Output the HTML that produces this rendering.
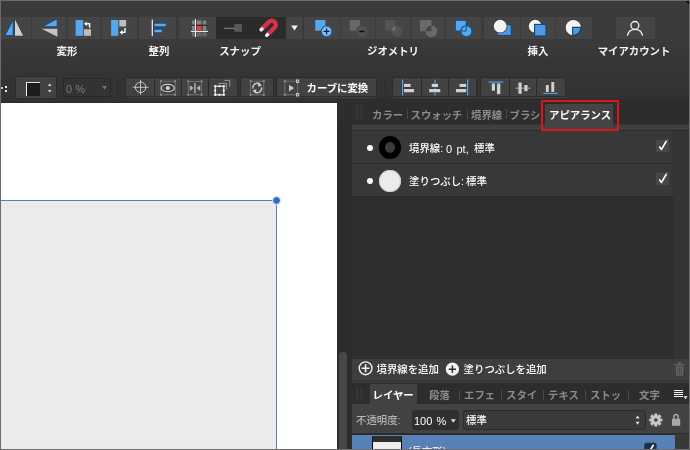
<!DOCTYPE html>
<html lang="ja">
<head>
<meta charset="utf-8">
<title>アピアランス</title>
<style>
*{box-sizing:border-box;margin:0;padding:0}
html,body{width:690px;height:450px;overflow:hidden;background:#393939}
body{will-change:transform;font-family:"Liberation Sans","Noto Sans CJK JP",sans-serif;font-size:10.4px;color:#fff;position:relative}
.a{position:absolute}
#frame{left:0;top:0;width:690px;height:450px;border:1px solid #6c6c6c;z-index:50;pointer-events:none}
/* top toolbar */
#tb{left:0;top:0;width:690px;height:102px;background:linear-gradient(#3b3b3b 0,#3a3a3a 40px,#353535 70px,#313131 100px)}
.b{position:absolute;top:17px;height:22px;background:#454545}
.b.p{background:#2b2b2b}
.lbl{position:absolute;top:45px;height:14px;line-height:14px;font-weight:700;font-size:10.4px;white-space:nowrap;transform:translateX(-50%);color:#f4f4f4}
.cb{position:absolute;top:78px;height:18px;background:#424242}
.cg{position:absolute;top:77px;height:20px;background:#2a2a2a;border-radius:2px;box-shadow:0 1px 0 #414141}
svg{position:absolute;left:0;top:0;overflow:visible}
/* canvas */
#cv{left:1px;top:103px;width:336px;height:347px;background:#fff}
#gap{left:337px;top:102px;width:15px;height:348px;background:#2c2c2c}
/* right panel */
#rp{left:352px;top:102px;width:338px;height:348px;background:#343434}
.tab{position:absolute;height:14px;line-height:14px;font-size:10.4px;color:#8b8b8b;white-space:nowrap;font-weight:700}
.sep{position:absolute;width:1px;height:10px;background:#484848}
.t{position:absolute;white-space:nowrap;line-height:14px;height:14px;font-weight:500}
</style>
</head>
<body>
<div class="a" id="tb">
  <!-- transform group -->
  <div class="b" style="left:0;width:31px"></div>
  <div class="b" style="left:32px;width:34px"></div>
  <div class="b" style="left:67px;width:34px"></div>
  <div class="b" style="left:102px;width:35px"></div>
  <!-- align -->
  <div class="b" style="left:139px;width:37.4px"></div>
  <!-- snap -->
  <div class="b" style="left:179px;width:37px"></div>
  <div class="b p" style="left:216px;width:35px"></div>
  <div class="b p" style="left:251px;width:35px"></div>
  <div class="b" style="left:286px;width:16px"></div>
  <!-- geometry -->
  <div class="b" style="left:304px;width:36px"></div>
  <div class="b" style="left:341px;width:34px"></div>
  <div class="b" style="left:376px;width:34px"></div>
  <div class="b" style="left:411px;width:34px"></div>
  <div class="b" style="left:446px;width:35px"></div>
  <!-- insert -->
  <div class="b" style="left:484px;width:36px"></div>
  <div class="b" style="left:521px;width:34px"></div>
  <div class="b" style="left:556px;width:36px"></div>
  <!-- account -->
  <div class="b" style="left:615.5px;width:39px"></div>


  <svg width="690" height="102" viewBox="0 0 690 102" style="z-index:5">
    <!-- flip horizontal -->
    <path d="M13.2 19.8 L13.2 35.6 L4.8 35.6 Z" fill="#56a8ee" stroke="#1d4570" stroke-width="1" stroke-linejoin="round"/>
    <path d="M15 19.6 L15 35.8 L23.1 35.8 Z" fill="#d0d0d0" stroke="#303030" stroke-width=".7" paint-order="stroke"/>
    <!-- flip vertical -->
    <path d="M57.2 18.8 L57.2 26.8 L42 26.8 Z" fill="#56a8ee" stroke="#1d4570" stroke-width="1" stroke-linejoin="round"/>
    <path d="M41.6 28.8 L57.4 28.8 L57.4 36.8 Z" fill="#c4c4c4"/>
    <!-- rotate ccw -->
    <rect x="75.6" y="20" width="7.6" height="15.8" fill="#56a8ee"/>
    <rect x="84" y="29.2" width="7" height="6.6" fill="#bdbdbd"/>
    <path d="M89.6 27.8 L89.6 23.8 L86 23.8" fill="none" stroke="#fff" stroke-width="1.4"/>
    <path d="M84 23.8 L86.8 21.6 L86.8 26 Z" fill="#fff"/>
    <!-- rotate cw -->
    <rect x="111.1" y="20" width="7.2" height="15.8" fill="#56a8ee"/>
    <rect x="119.3" y="20" width="6.8" height="6.5" fill="#bdbdbd"/>
    <path d="M125 28 L125 32.4 L122 32.4" fill="none" stroke="#fff" stroke-width="1.4"/>
    <path d="M119.6 32.4 L122.6 30 L122.6 34.8 Z" fill="#fff"/>
    <!-- align -->
    <rect x="151.7" y="19.6" width="1.2" height="16.4" fill="#f0f0f0"/>
    <rect x="154" y="23.2" width="12.2" height="3.6" fill="#5aacf0" stroke="#1c4a7c" stroke-width="1"/>
    <rect x="154" y="29.2" width="8.2" height="3.6" fill="#5aacf0" stroke="#1c4a7c" stroke-width="1"/>
    <!-- snap grid -->
    <rect x="191.4" y="20" width="15.4" height="11" fill="#303030"/>
    <g fill="#858585">
      <rect x="191.8" y="20.4" width="3" height="4.2"/><rect x="196.6" y="20.4" width="5" height="4.2"/><rect x="202.6" y="20.4" width="3.8" height="4.2"/>
      <rect x="191.8" y="26" width="3" height="4.6"/><rect x="202.6" y="26" width="3.8" height="4.6"/>
      <rect x="191.8" y="32.4" width="3" height="4" opacity=".6"/><rect x="196.6" y="32.4" width="5" height="4" opacity=".6"/><rect x="202.6" y="32.4" width="3.8" height="4" opacity=".6"/>
    </g>
    <rect x="196.6" y="26" width="5" height="4.6" fill="#e8404a"/>
    <rect x="194.9" y="19" width="1.1" height="18" fill="#e8e8e8"/>
    <rect x="191" y="30.9" width="17" height="1.1" fill="#e8e8e8"/>
    <!-- snap to (dim) -->
    <rect x="234.3" y="24" width="7.6" height="7.8" fill="#585858"/>
    <rect x="224" y="27.8" width="11" height="1" fill="#8c8c8c"/>
    <!-- magnet -->
    <path d="M261.9 29 L268.97 21.87 A4 4 0 0 1 274.63 27.53 L267.5 34.6" fill="none" stroke="#d8304a" stroke-width="4.4"/>
    <path d="M261.9 29 L261.1 29.8" stroke="#fff" stroke-width="3.4" stroke-linecap="round" fill="none"/>
    <path d="M267.5 34.6 L266.7 35.4" stroke="#fff" stroke-width="3.4" stroke-linecap="round" fill="none"/>
    <!-- dropdown -->
    <path d="M291.2 25.4 L297.8 25.4 L294.5 30.4 Z" fill="#f2f2f2"/>
    <!-- add -->
    <rect x="315.2" y="20" width="10.2" height="10.7" fill="#56a8ee"/>
    <circle cx="326.6" cy="31.4" r="5.4" fill="#7dbdf4" stroke="#1e4f86" stroke-width="1.1"/>
    <path d="M323.6 31.4 H329.6 M326.6 28.4 V34.4" stroke="#08203c" stroke-width="1.2"/>
    <!-- subtract (disabled) -->
    <rect x="349.7" y="20" width="10.2" height="10.7" fill="#686868"/>
    <circle cx="362" cy="31.4" r="5.6" fill="#525252" stroke="#484848" stroke-width="1.2"/>
    <rect x="359.4" y="30.7" width="5.2" height="1.5" fill="#0c0c0c"/>
    <!-- intersect (disabled) -->
    <rect x="385.2" y="20" width="10.3" height="10.7" fill="#545454"/>
    <circle cx="397" cy="31.4" r="5.6" fill="#515151"/>
    <path d="M391.6 30.7 A5.6 5.6 0 0 1 395.5 26 L395.5 30.7 Z" fill="#707070"/>
    <!-- xor (disabled) -->
    <rect x="420" y="20" width="11.4" height="11.2" fill="#6a6a6a"/>
    <circle cx="431.4" cy="31.4" r="5.8" fill="#6a6a6a"/>
    <path d="M425.6 31.2 A5.8 5.8 0 0 1 431.4 25.6 L431.4 31.2 Z" fill="#464646"/>
    <!-- divide -->
    <rect x="455.4" y="20.4" width="10.8" height="10.6" fill="#56a8ee" stroke="#1e4f86" stroke-width="1"/>
    <circle cx="466.4" cy="31.2" r="5.6" fill="#56a8ee" stroke="#1e4f86" stroke-width="1.2"/>
    <path d="M460.8 31 H466.2 V25.6" fill="none" stroke="#1e4f86" stroke-width="1"/>
    <!-- insert behind -->
    <rect x="497.2" y="24.6" width="14" height="10.8" fill="#4a9be6" stroke="#1d3f66" stroke-width="1"/>
    <circle cx="500.2" cy="26.2" r="7.2" fill="#3a3a3a"/>
    <circle cx="500.2" cy="26.2" r="6.4" fill="#f4f4f4"/>
    <!-- insert top -->
    <circle cx="535.2" cy="26.2" r="7.2" fill="#3a3a3a"/>
    <circle cx="535.2" cy="26.2" r="6.4" fill="#f4f4f4"/>
    <rect x="534.6" y="24.4" width="11.4" height="11.6" fill="#4a9be6" stroke="#1d3f66" stroke-width="1.1"/>
    <!-- insert inside -->
    <circle cx="573.3" cy="27.7" r="8.4" fill="#3a3a3a"/>
    <circle cx="573.3" cy="27.7" r="7.6" fill="#f4f4f4"/>
    <path d="M572.6 27.4 H580.9 A7.6 7.6 0 0 1 572.6 35.3 Z" fill="#4a9be6" stroke="#1d3f66" stroke-width="1.1" stroke-linejoin="round"/>
    <!-- account -->
    <circle cx="634.9" cy="25.4" r="3.9" fill="none" stroke="#f4f4f4" stroke-width="1.3"/>
    <path d="M627.6 35.2 A7.6 7.6 0 0 1 642.4 35.2" fill="none" stroke="#f4f4f4" stroke-width="1.3" stroke-linecap="round"/>

    <!-- ===== context toolbar icons ===== -->
    <!-- stepper -->
    <path d="M47.9 86 L51.5 86 L49.7 83.4 Z M47.9 90 L51.5 90 L49.7 92.6 Z" fill="#d4d4d4"/>
    <!-- 0% dropdown -->
    <path d="M102 86 L107 86 L104.5 89.6 Z" fill="#777"/>
    <!-- crosshair -->
    <circle cx="140.6" cy="87.3" r="5.2" fill="none" stroke="#d8d8d8" stroke-width=".9"/>
    <path d="M132.8 87.3 H148.4 M140.6 80 V94.8" stroke="#d0d0d0" stroke-width=".9"/>
    <!-- eye -->
    <g stroke="#787878" stroke-width=".8" fill="none">
      <rect x="160.8" y="81.2" width="14.4" height="13.6"/>
      <rect x="188.2" y="81.4" width="13.4" height="13.4"/>
      <rect x="250.6" y="81.2" width="13.2" height="13.6"/>
      <rect x="284.8" y="81.2" width="12.8" height="13.6"/>
    </g>
    <g fill="#8a8a8a">
      <rect x="159.8" y="80.2" width="2" height="2"/><rect x="174.2" y="80.2" width="2" height="2"/><rect x="159.8" y="93.8" width="2" height="2"/><rect x="174.2" y="93.8" width="2" height="2"/>
      <rect x="187.2" y="80.4" width="2" height="2"/><rect x="200.6" y="80.4" width="2" height="2"/><rect x="187.2" y="93.8" width="2" height="2"/><rect x="200.6" y="93.8" width="2" height="2"/>
      <rect x="249.6" y="80.2" width="2" height="2"/><rect x="262.8" y="80.2" width="2" height="2"/><rect x="249.6" y="93.8" width="2" height="2"/><rect x="262.8" y="93.8" width="2" height="2"/>
      <rect x="283.8" y="80.2" width="2" height="2"/><rect x="283.8" y="93.8" width="2" height="2"/>
    </g>
    <g fill="none" stroke="#e8e8e8" stroke-width=".8"><rect x="296.4" y="80" width="2.4" height="2.4"/><rect x="296.4" y="93.6" width="2.4" height="2.4"/></g>
    <ellipse cx="167.8" cy="88" rx="6.6" ry="3.7" fill="none" stroke="#d8d8d8" stroke-width="1.1"/>
    <circle cx="167.8" cy="88" r="2.1" fill="#d0d0d0"/>
    <!-- mirror -->
    <rect x="194.2" y="83" width="1.6" height="10.2" fill="#a8a8a8"/>
    <path d="M189.8 85.2 L193.6 88.1 L189.8 91 Z M200.2 85.2 L196.4 88.1 L200.2 91 Z" fill="#b4b4b4"/>
    <!-- cascade -->
    <path d="M218.6 83.4 H226.4 V89.6 M224.4 80.4 H229.8 V86.6" fill="none" stroke="#9a9a9a" stroke-width="1"/>
    <rect x="215.2" y="86.2" width="8.6" height="8.6" fill="none" stroke="#fff" stroke-width="1"/>
    <g fill="#fff"><rect x="214.2" y="85.2" width="2" height="2"/><rect x="222.8" y="85.2" width="2" height="2"/><rect x="214.2" y="93.8" width="2" height="2"/><rect x="222.8" y="93.8" width="2" height="2"/><rect x="218.6" y="85.3" width="1.8" height="1.8"/><rect x="218.6" y="93.9" width="1.8" height="1.8"/><rect x="214.3" y="89.6" width="1.8" height="1.8"/><rect x="222.9" y="89.6" width="1.8" height="1.8"/></g>
    <!-- sync -->
    <path d="M253 88.6 A4.2 4.2 0 0 1 260 84.6" fill="none" stroke="#d0d0d0" stroke-width="1.4"/>
    <path d="M261.4 87.4 A4.2 4.2 0 0 1 254.4 91.4" fill="none" stroke="#d0d0d0" stroke-width="1.4"/>
    <path d="M258.6 82.6 L262 85.6 L258 86.8 Z M255.8 93.4 L252.4 90.4 L256.4 89.2 Z" fill="#d0d0d0"/>
    <!-- play -->
    <path d="M289 84.8 L294.2 88.1 L289 91.4 Z" fill="#c8c8c8"/>
    <!-- align left -->
    <rect x="402.1" y="79.5" width="1.1" height="16" fill="#6aa8e2" stroke="#27425e" stroke-width=".9" paint-order="stroke"/>
    <rect x="404" y="83.8" width="6.6" height="3.2" fill="#d0d0d0" stroke="#303030" stroke-width=".7" paint-order="stroke"/><rect x="404" y="89" width="10.1" height="3.3" fill="#d0d0d0" stroke="#303030" stroke-width=".7" paint-order="stroke"/>
    <!-- align centre -->
    <rect x="434.5" y="79.5" width="1.1" height="16" fill="#6aa8e2" stroke="#27425e" stroke-width=".9" paint-order="stroke"/>
    <rect x="431.7" y="83.8" width="6.4" height="3.2" fill="#d0d0d0" stroke="#303030" stroke-width=".7" paint-order="stroke"/><rect x="429.1" y="89" width="11.2" height="3.3" fill="#d0d0d0" stroke="#303030" stroke-width=".7" paint-order="stroke"/>
    <!-- align right -->
    <rect x="467.1" y="79.5" width="1.1" height="16" fill="#6aa8e2" stroke="#27425e" stroke-width=".9" paint-order="stroke"/>
    <rect x="459.5" y="83.8" width="6.8" height="3.2" fill="#d0d0d0" stroke="#303030" stroke-width=".7" paint-order="stroke"/><rect x="455.9" y="89" width="10.4" height="3.3" fill="#d0d0d0" stroke="#303030" stroke-width=".7" paint-order="stroke"/>
    <!-- align top -->
    <rect x="488.4" y="81.5" width="15" height="1.1" fill="#6aa8e2" stroke="#27425e" stroke-width=".9" paint-order="stroke"/>
    <rect x="491.7" y="83.4" width="3.3" height="7.3" fill="#d0d0d0" stroke="#303030" stroke-width=".7" paint-order="stroke"/><rect x="496.9" y="83.4" width="3.5" height="10.8" fill="#d0d0d0" stroke="#303030" stroke-width=".7" paint-order="stroke"/>
    <!-- align middle -->
    <rect x="515.8" y="87.6" width="14.4" height="1.1" fill="#9ab8d8"/>
    <rect x="518.4" y="82.5" width="3.3" height="11.3" fill="#d0d0d0" stroke="#303030" stroke-width=".7" paint-order="stroke"/><rect x="524.3" y="85" width="3.3" height="6.2" fill="#d0d0d0" stroke="#303030" stroke-width=".7" paint-order="stroke"/>
    <!-- align bottom -->
    <rect x="543.2" y="92.8" width="14.4" height="1.1" fill="#6aa8e2" stroke="#27425e" stroke-width=".9" paint-order="stroke"/>
    <rect x="545.8" y="85" width="3" height="7" fill="#d0d0d0" stroke="#303030" stroke-width=".7" paint-order="stroke"/><rect x="551.3" y="82" width="3" height="10" fill="#d0d0d0" stroke="#303030" stroke-width=".7" paint-order="stroke"/>
  </svg>
  <div class="lbl" style="left:67px">変形</div>
  <div class="lbl" style="left:159px">整列</div>
  <div class="lbl" style="left:240px">スナップ</div>
  <div class="lbl" style="left:393px">ジオメトリ</div>
  <div class="lbl" style="left:538px">挿入</div>
  <div class="lbl" style="left:634px">マイアカウント</div>

  <!-- context toolbar -->
  <div class="a" style="left:5.4px;top:86.4px;width:1.8px;height:1.8px;background:#f0f0f0"></div><div class="a" style="left:5.4px;top:90.2px;width:1.8px;height:1.8px;background:#f0f0f0"></div><div class="a" style="left:1px;top:87.4px;width:2.2px;height:1.4px;background:#bdbdbd"></div>
  <div class="cg" style="left:15px;width:42px;top:76px;height:23px;border-radius:3px;box-shadow:none"></div>
  <div class="cb" style="left:16px;width:40px;top:77px;height:21px;border-radius:2px"></div>
  <div class="a" style="left:26px;top:82px;width:14px;height:14px;background:#1c1c1c;border-left:1.5px solid #eee;border-top:1.5px solid #ddd"></div>
  <div class="a" style="left:62.5px;top:78px;width:48px;height:19px;background:#333;border:1px solid #292929;border-radius:2px"></div>
  <div class="t" style="left:66px;top:81.5px;font-size:11px;color:#7c7c7c">0 %</div>
  <div class="a" style="left:117px;top:78px;width:1px;height:20px;background:#2a2a2a"></div>
  <div class="cg" style="left:125px;width:113px"></div>
  <div class="cb" style="left:126px;width:28px"></div>
  <div class="cb" style="left:155px;width:26px"></div>
  <div class="cb" style="left:182px;width:26px"></div>
  <div class="cb" style="left:209px;width:28px"></div>
  <div class="cg" style="left:240px;width:34px"></div>
  <div class="cb" style="left:241px;width:32px"></div>
  <div class="cg" style="left:276px;width:101px"></div>
  <div class="cb" style="left:277px;width:99px"></div>
  <div class="t" style="left:306.5px;top:82px;font-weight:700;font-size:10.4px">カーブに変換</div>
  <div class="a" style="left:385px;top:78px;width:1px;height:20px;background:#2a2a2a"></div>
  <div class="cg" style="left:392px;width:85px"></div>
  <div class="cb" style="left:393px;width:28px"></div>
  <div class="cb" style="left:422px;width:26px"></div>
  <div class="cb" style="left:449px;width:27px"></div>
  <div class="cg" style="left:480px;width:86px"></div>
  <div class="cb" style="left:481px;width:28px"></div>
  <div class="cb" style="left:510px;width:26px"></div>
  <div class="cb" style="left:537px;width:28px"></div>
  <div class="a" style="left:0;top:102px;width:352px;height:1px;background:#2a2a2a"></div>
</div>

<!-- canvas -->
<div class="a" id="cv">
  <div class="a" style="left:0;top:98px;width:275px;height:249px;background:#ebebeb"></div>
  <div class="a" style="left:0;top:97px;width:276px;height:1px;background:#5b7fb0"></div>
  <div class="a" style="left:275px;top:97px;width:1px;height:250px;background:#5b7fb0"></div>
  <div class="a" style="left:271px;top:93px;width:9px;height:9px;border-radius:50%;background:#2f6fc9;border:1px solid #e8f0fb"></div>
</div>
<div class="a" id="gap">
  <div class="a" style="left:2.4px;top:250.4px;width:7.4px;height:100px;background:#474747;border-radius:3.5px 3.5px 0 0"></div>
</div>

<!-- right panel -->
<div class="a" id="rp">
  <!-- tab row -->
  <div class="a" style="left:-15px;top:-3px;width:353px;height:25px;background:#2d2d2d"></div>
  <div class="a" style="left:0;top:22.5px;width:338px;height:6px;background:#3f3f3f"></div>
  <div class="a" style="left:0;top:28px;width:338px;height:1px;background:#2a2a2a"></div>
  <div class="a" style="left:193px;top:2px;width:68px;height:25px;background:#444"></div>
  <div class="tab" style="left:20px;top:7px">カラー</div>
  <div class="sep" style="left:55px;top:7px"></div>
  <div class="tab" style="left:58.5px;top:7px">スウォッチ</div>
  <div class="sep" style="left:115px;top:7px"></div>
  <div class="tab" style="left:119px;top:7px">境界線</div>
  <div class="sep" style="left:154px;top:7px"></div>
  <div class="tab" style="left:157.5px;top:7px">ブラシ</div>
  <div class="tab" style="left:197px;top:7px;color:#fff;font-weight:700">アピアランス</div>
  <div class="a" style="left:189.2px;top:-2.4px;width:77.6px;height:31.2px;border:2.5px solid #df151b"></div>

  <!-- list -->
  <div class="a" style="left:0;top:29px;width:320px;height:66px;background:#383838"></div>
  <div class="a" style="left:0;top:61px;width:320px;height:1px;background:#2a2a2a"></div>
  <div class="a" style="left:0;top:94px;width:320px;height:1px;background:#2a2a2a"></div>
  <div class="a" style="left:0;top:95px;width:322px;height:162px;background:#2e2e2e"></div>
  <!-- row1 -->
  <div class="a" style="left:15px;top:43px;width:6px;height:6px;border-radius:50%;background:#fff"></div>
  <div class="a" style="left:26.6px;top:34.2px;width:22.8px;height:22.8px;border-radius:50%;background:#3a3a3a;border:6.4px solid #000"></div>
  <div class="t" style="left:57px;top:40px">境界線:</div><div class="t" style="left:94px;top:40px;font-size:11px">0</div><div class="t" style="left:104.5px;top:40px;font-size:11px">pt,</div><div class="t" style="left:122px;top:40px">標準</div>
  <div class="a" style="left:304px;top:38px;width:12.5px;height:12px;background:#474747"></div>
  <!-- row2 -->
  <div class="a" style="left:15px;top:76px;width:6px;height:6px;border-radius:50%;background:#fff"></div>
  <div class="a" style="left:27.2px;top:67.6px;width:22px;height:22px;border-radius:50%;background:#ebebeb;box-shadow:inset 0 0 0 1px #cfcfcf"></div>
  <div class="t" style="left:57px;top:73px">塗りつぶし:</div><div class="t" style="left:114px;top:73px">標準</div>
  <div class="a" style="left:304px;top:71px;width:12.5px;height:12px;background:#474747"></div>

  <!-- bottom bar -->
  <div class="a" style="left:0;top:257px;width:338px;height:21px;background:#3e3e3e"></div>
  <div class="a" style="left:0;top:276px;width:338px;height:1px;background:#414141"></div>
  <div class="a" style="left:0;top:278px;width:338px;height:3px;background:#3a3a3a"></div>
  <div class="t" style="left:24.5px;top:261px">境界線を追加</div>
  <div class="t" style="left:111.5px;top:261px">塗りつぶしを追加</div>

  <!-- layers tabs -->
  <div class="a" style="left:0;top:281px;width:338px;height:21px;background:#2d2d2d"></div>
  <div class="a" style="left:18px;top:282px;width:47px;height:20px;background:#424242"></div>
  <div class="tab" style="left:20.5px;top:287px;color:#fff;font-weight:700">レイヤー</div>
  <div class="tab" style="left:77px;top:287px">段落</div>
  <div class="sep" style="left:107px;top:288px"></div>
  <div class="tab" style="left:112px;top:287px">エフェ</div>
  <div class="sep" style="left:149px;top:288px"></div>
  <div class="tab" style="left:154px;top:287px">スタイ</div>
  <div class="sep" style="left:191px;top:288px"></div>
  <div class="tab" style="left:196px;top:287px">テキス</div>
  <div class="sep" style="left:233px;top:288px"></div>
  <div class="tab" style="left:238px;top:287px">ストッ</div>
  <div class="sep" style="left:276px;top:288px"></div>
  <div class="tab" style="left:287px;top:287px">文字</div>

  <!-- opacity row -->
  <div class="a" style="left:0;top:302px;width:338px;height:31px;background:#424242"></div>
  <div class="t" style="left:4px;top:312px;color:#b4b4b4">不透明度:</div>
  <div class="a" style="left:60px;top:308px;width:47px;height:20px;background:#2f2f2f;border-radius:3px"></div>
  <div class="t" style="left:62px;top:312px;font-size:11px">100</div><div class="t" style="left:84.5px;top:312px;font-size:11px">%</div>
  <div class="a" style="left:110.5px;top:308px;width:183px;height:20px;background:#3a3a3a;border:1px solid #2b2b2b;border-radius:3px"></div>
  <div class="t" style="left:114px;top:312px">標準</div>

  <!-- layer row -->
  <div class="a" style="left:0;top:331px;width:338px;height:2px;background:#2b2b2b"></div><div class="a" style="left:0;top:332.5px;width:323px;height:16px;background:#5781b6"></div>
  <div class="a" style="left:323px;top:332px;width:15px;height:16px;background:#393939"></div>
  <div class="a" style="left:20px;top:334px;width:30px;height:14px;background:#eee;border:1px solid #000;border-top:6px solid #2e2e2e"></div>
  <div class="t" style="left:56px;top:343px;color:#e8eef8">(長方形)</div>
</div>


<svg class="a" width="690" height="450" viewBox="0 0 690 450" style="z-index:20">
  <path d="M685.4 1 H689 V4.6 Z" fill="#0a0a0a"/>
  <!-- grips -->
  <g fill="#3c3c3c">
    <rect x="356.6" y="105" width="1.4" height="14" rx=".7"/><rect x="360.6" y="105" width="1.4" height="14" rx=".7"/>
    <rect x="356.6" y="387" width="1.4" height="14" rx=".7"/><rect x="360.6" y="387" width="1.4" height="14" rx=".7"/>
  </g>
  <!-- checks -->
  <path d="M659.3 146.6 L661.5 149.4 L666.4 141" fill="none" stroke="#fff" stroke-width="1.6" stroke-linejoin="round"/><path d="M666.4 141 L667.6 139" stroke="#8a8a8a" stroke-width="1"/>
  <path d="M659.3 179.6 L661.5 182.4 L666.4 174" fill="none" stroke="#fff" stroke-width="1.6" stroke-linejoin="round"/><path d="M666.4 174 L667.6 172" stroke="#8a8a8a" stroke-width="1"/>
  <!-- add stroke -->
  <circle cx="365.6" cy="368.3" r="6.4" fill="none" stroke="#f0f0f0" stroke-width="1.4"/>
  <path d="M361.6 368.3 H369.6 M365.6 364.3 V372.3" stroke="#f0f0f0" stroke-width="1.6"/>
  <!-- add fill -->
  <circle cx="452.4" cy="369.2" r="6.6" fill="#f4f4f4"/>
  <path d="M448.8 369.2 H456 M452.4 365.6 V372.8" stroke="#2c2c2c" stroke-width="1.5"/>
  <!-- trash -->
  <g fill="#656565">
    <rect x="674.6" y="364.2" width="10" height="1.3"/>
    <rect x="677.8" y="362.2" width="3.6" height="1.6"/>
    <path d="M675.6 366.4 H683.6 L683 375.4 H676.2 Z"/>
  </g>
  <path d="M677.8 367.4 V374.2 M679.6 367.4 V374.2 M681.4 367.4 V374.2" stroke="#3c3c3c" stroke-width=".7"/>
  <!-- hamburger -->
  <path d="M673.5 390.5 H683 M673.5 392.6 H683 M673.5 394.7 H683 M673.5 396.8 H683" stroke="#f4f4f4" stroke-width="1.05" shape-rendering="crispEdges"/>
  <path d="M683.5 396.2 H687.5 L685.5 399.2 Z" fill="#f0f0f0"/>
  <!-- opacity dropdown -->
  <path d="M450.8 419.2 H455.8 L453.3 422.8 Z" fill="#e0e0e0"/>
  <!-- blend stepper -->
  <path d="M635.6 418.4 H639.6 L637.6 415.4 Z M635.6 421.8 H639.6 L637.6 424.8 Z" fill="#e0e0e0"/>
  <!-- gear -->
  <g transform="translate(655.8 420)">
    <g fill="#c8c8c8">
      <circle r="4.7"/>
      <rect x="-1.5" y="-6.6" width="3" height="13.2" rx=".4"/>
      <rect x="-1.5" y="-6.6" width="3" height="13.2" rx=".4" transform="rotate(45)"/>
      <rect x="-1.5" y="-6.6" width="3" height="13.2" rx=".4" transform="rotate(90)"/>
      <rect x="-1.5" y="-6.6" width="3" height="13.2" rx=".4" transform="rotate(135)"/>
    </g>
    <circle r="1.8" fill="#404040"/>
  </g>
  <!-- lock -->
  <rect x="672" y="418.8" width="8.2" height="7" fill="#a8a8a8"/>
  <path d="M673.9 419 V416.8 A2.1 2.4 0 0 1 678.1 416.8 V419" fill="none" stroke="#a8a8a8" stroke-width="1.5"/>
  <!-- layer visible check -->
  <rect x="644.2" y="442.8" width="12.4" height="10" rx="2.5" fill="#1f2f48"/>
  <path d="M647.4 449.4 L649.4 451.4 L653.6 444.8" fill="none" stroke="#fff" stroke-width="1.6"/>
</svg>
<div class="a" id="frame"></div>
</body>
</html>
